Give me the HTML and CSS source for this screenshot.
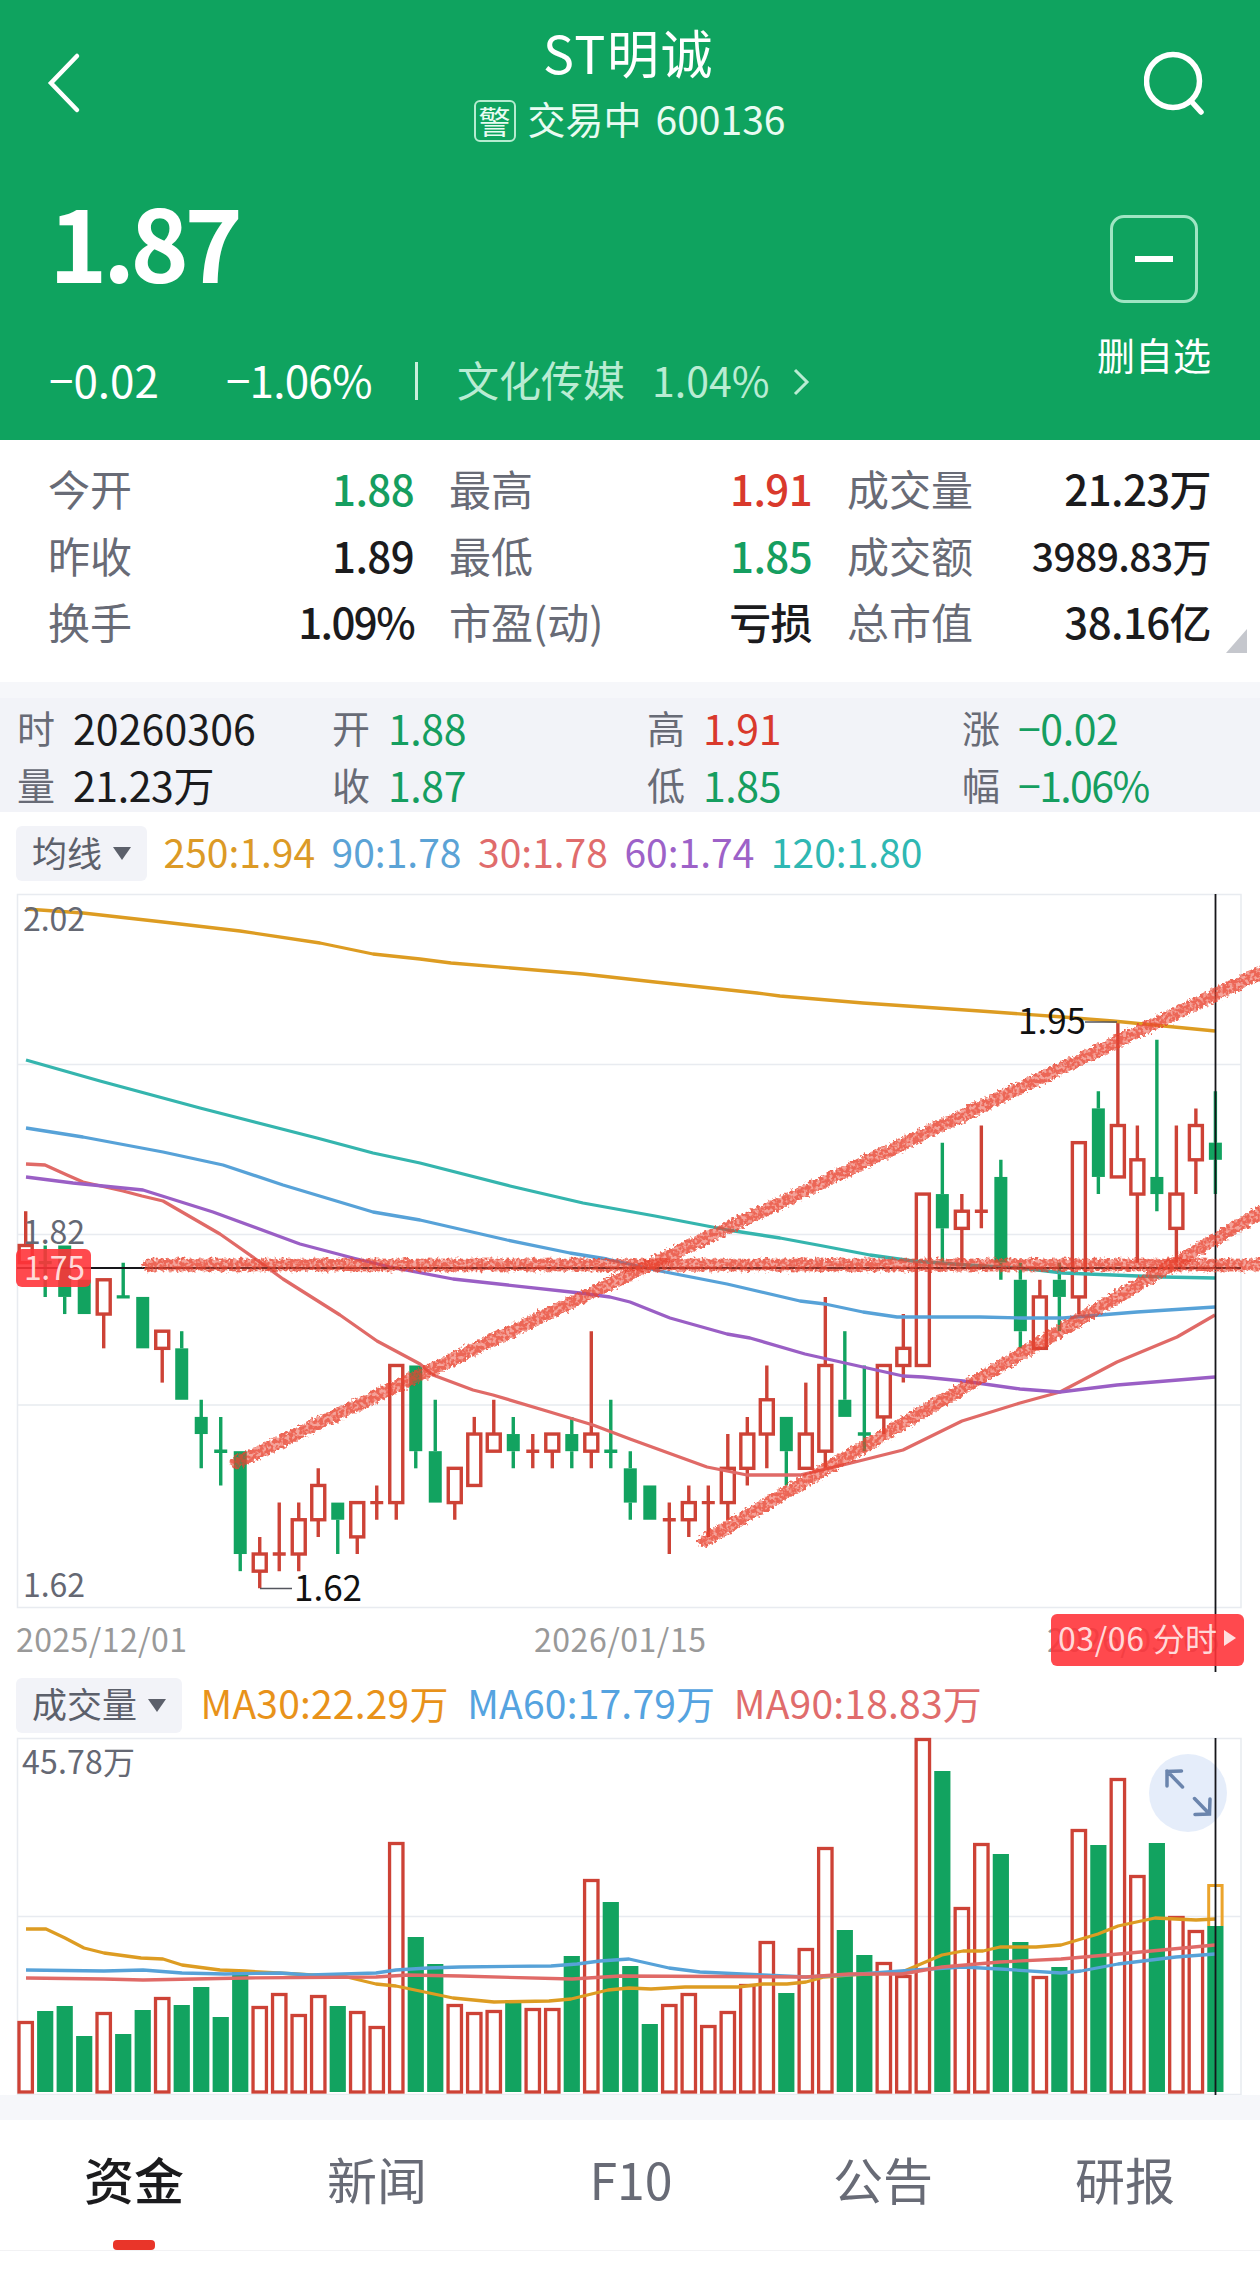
FILE: index.html
```
<!DOCTYPE html>
<html lang="zh-CN">
<head>
    <meta charset="UTF-8">
    <meta name="viewport" content="width=device-width, initial-scale=1.0">
    <title>ST明诚 600136</title>
    <link rel="stylesheet" href="styles.css">
</head>
<body>
    <header>
        <div class="nav">
            <svg class="back" width="40" height="64" viewBox="0 0 40 64"><path d="M32 5L6 32L32 59"/></svg>
            <div class="title">
                <h1>ST明诚</h1>
                <div class="sub"><span class="badge">警</span><span>交易中</span><span>600136</span></div>
            </div>
            <svg class="search" width="64" height="68" viewBox="0 0 64 68"><circle cx="29" cy="31" r="26.5"/><path d="M47 51L57 62"/></svg>
        </div>
        <div class="quote">
            <div>
                <div class="price">1.87</div>
                <div class="change">
                    <span class="diff">−0.02</span>
                    <span class="rate">−1.06%</span>
                    <i></i>
                    <span class="sector">文化传媒</span>
                    <span class="sector-rate">1.04%</span>
                    <svg width="20" height="30" viewBox="0 0 20 30"><path d="M3 3L15 15L3 27"/></svg>
                </div>
            </div>
            <div class="fav">
                <div class="fav-btn"><b></b></div>
                <span>删自选</span>
            </div>
        </div>
    </header>

    <section class="stats">
        <div><label>今开</label><span class="green">1.88</span></div>
        <div><label>最高</label><span class="red">1.91</span></div>
        <div><label>成交量</label><span>21.23万</span></div>
        <div><label>昨收</label><span>1.89</span></div>
        <div><label>最低</label><span class="green">1.85</span></div>
        <div><label>成交额</label><span class="long">3989.83万</span></div>
        <div><label>换手</label><span class="pct">1.09%</span></div>
        <div><label>市盈(动)</label><span>亏损</span></div>
        <div><label>总市值</label><span>38.16亿</span></div>
        <svg class="corner" width="21" height="24" viewBox="0 0 21 24"><path d="M21 0V24H0Z"/></svg>
    </section>

    <section class="info">
        <div><label>时</label><span class="day">20260306</span></div>
        <div><label>开</label><span class="green">1.88</span></div>
        <div><label>高</label><span class="red">1.91</span></div>
        <div><label>涨</label><span class="green">−0.02</span></div>
        <div><label>量</label><span>21.23万</span></div>
        <div><label>收</label><span class="green">1.87</span></div>
        <div><label>低</label><span class="green">1.85</span></div>
        <div><label>幅</label><span class="green pct">−1.06%</span></div>
    </section>

    <div class="legend ma">
        <div class="pill">均线<i></i></div>
        <span class="c-orange">250:1.94</span>
        <span class="c-blue">90:1.78</span>
        <span class="c-red">30:1.78</span>
        <span class="c-purple">60:1.74</span>
        <span class="c-teal">120:1.80</span>
    </div>
    <svg id="kline" width="1260" height="790" viewBox="0 882 1260 790">
        <defs>
            <filter id="crayon" filterUnits="userSpaceOnUse" x="0" y="882" width="1260" height="790">
                <feTurbulence type="fractalNoise" baseFrequency="0.3" numOctaves="2" seed="4" result="noise"/>
                <feDisplacementMap in="SourceGraphic" in2="noise" scale="8" xChannelSelector="R" yChannelSelector="G" result="rough"/>
                <feColorMatrix in="noise" type="matrix" values="0 0 0 0 0  0 0 0 0 0  0 0 0 0 0  0 0 5 0 -1.75" result="grain"/>
                <feComposite in="rough" in2="grain" operator="in" result="dots"/>
                <feComponentTransfer in="rough" result="base"><feFuncA type="linear" slope="0.6"/></feComponentTransfer>
                <feMerge><feMergeNode in="base"/><feMergeNode in="dots"/></feMerge>
            </filter>
        </defs>
        <path class="grid" d="M17.5 894.5H1241V1607.5H17.5ZM17.5 1064.5H1241M17.5 1234.5H1241M17.5 1405H1241"/>
        <g id="candles"></g>
        <g class="lines">
            <polyline class="s-orange" points="26,909 83,913 163,922 240,931 320,943 373,954 420,959 451,963 583,974 655,982 757,993 780,996 863,1003 980,1011 1063,1017 1113,1021 1215,1031"/>
            <polyline class="s-teal" points="26,1060 100,1081 200,1108 317,1138 373,1153 420,1163 510,1186 583,1203 655,1216 728,1230 780,1238 823,1246 870,1255 913,1261 967,1265 1020,1268 1063,1273 1163,1277 1215,1278"/>
            <polyline class="s-blue" points="26,1128 83,1137 163,1152 223,1165 283,1185 373,1212 420,1220 507,1240 570,1253 607,1259 660,1271 727,1284 800,1301 825,1304 863,1312 897,1317 980,1317 1020,1318 1063,1318 1137,1312 1215,1307"/>
            <polyline class="s-red" points="26,1164 45,1165 67,1175 83,1182 123,1191 142,1196 163,1201 220,1234 257,1260 283,1279 340,1315 377,1341 420,1364 433,1375 473,1390 493,1395 550,1412 593,1425 630,1439 707,1467 747,1475 800,1475 847,1464 903,1450 962,1421 1020,1403 1060,1392 1117,1362 1177,1337 1215,1315"/>
            <polyline class="s-purple" points="26,1177 73,1183 143,1190 213,1212 300,1244 353,1258 390,1267 453,1279 580,1293 610,1297 630,1302 670,1318 727,1334 750,1338 805,1354 845,1363 903,1376 923,1377 963,1381 1020,1389 1060,1392 1117,1385 1215,1377"/>
        </g>
        <text class="axis" x="23" y="931" textLength="62">2.02</text>
        <text class="axis" x="23" y="1244" textLength="62">1.82</text>
        <text class="axis" x="23" y="1597" textLength="62">1.62</text>
        <path class="lead" d="M260 1588.5H292M1085 1022H1117"/>
        <text class="mark" x="294" y="1601" textLength="68">1.62</text>
        <text class="mark" x="1018" y="1034" textLength="68">1.95</text>
        <text class="date" x="16" y="1652" textLength="171">2025/12/01</text>
        <text class="date" x="534" y="1652" textLength="172">2026/01/15</text>
        <text class="date" x="1047" y="1652" textLength="172">2026/03/06</text>
        <path class="cross" d="M17 1268H1241M1215.5 894V1672"/>
        <rect class="tag" x="16" y="1249" width="75" height="38" rx="6"/>
        <text class="tag-text" x="24" y="1280" textLength="61">1.75</text>
        <rect class="tag" x="1051" y="1614" width="193" height="52" rx="6"/>
        <text class="tag-text" x="1058" y="1651" textLength="86">03/06</text>
        <text class="tag-text" x="1153" y="1651" textLength="64">分时</text>
        <path class="tag-arrow" d="M1224 1630V1646L1236 1638Z"/>
        <g class="brush">
            <line x1="236" y1="1463" x2="1275" y2="966" filter="url(#crayon)"/>
            <line x1="704" y1="1541" x2="1275" y2="1204" filter="url(#crayon)"/>
            <line x1="149" y1="1265" x2="1275" y2="1265" filter="url(#crayon)"/>
        </g>
    </svg>

    <div class="legend vol">
        <div class="pill">成交量<i></i></div>
        <span class="c-amber">MA30:22.29万</span>
        <span class="c-sky">MA60:17.79万</span>
        <span class="c-red">MA90:18.83万</span>
    </div>
    <svg id="volume" width="1260" height="359" viewBox="0 1736 1260 359">
        <path class="grid" d="M17.5 1738.5H1241V2094.5H17.5ZM17.5 1916.5H1241"/>
        <g id="bars"></g>
        <g class="lines">
            <polyline class="s-orange" points="26,1929 46,1929 65,1938 84,1948 104,1953 141,1958 163,1959 182,1965 220,1970 245,1971 278,1973 347,1977 376,1984 396,1986 453,1998 494,2002 549,2001 571,1999 608,1990 629,1988 651,1989 685,1987 738,1987 763,1984 787,1984 806,1982 824,1977 849,1975 902,1972 942,1955 963,1951 983,1951 1000,1947 1036,1947 1061,1945 1098,1934 1118,1926 1155,1918 1196,1920 1215,1919"/>
            <polyline class="s-blue" points="26,1970 104,1971 143,1970 182,1973 225,1974 280,1973 310,1975 376,1973 396,1970 428,1968 460,1967 551,1966 577,1964 600,1961 629,1959 669,1968 700,1972 763,1975 806,1977 860,1974 915,1970 963,1967 1000,1969 1061,1973 1081,1971 1118,1964 1176,1957 1215,1954"/>
            <polyline class="s-red" points="26,1978 104,1979 143,1980 245,1978 376,1977 408,1975 460,1976 572,1979 620,1976 806,1977 849,1974 902,1974 942,1967 1000,1962 1061,1959 1130,1953 1215,1945"/>
        </g>
        <text class="axis" x="22" y="1774" textLength="113">45.78万</text>
        <circle class="zoom-bg" cx="1188" cy="1793" r="39"/>
        <path class="zoom-icon" d="M1182.500 1787L1167 1771M1167 1786V1771.500L1181.500 1771M1194.500 1798.500L1209.500 1814M1195 1814.500L1209.500 1814L1210 1799"/>
        <path class="cross" d="M1215.500 1738V2095"/>
    </svg>

    <nav class="tabs">
        <a class="active">资金</a>
        <a>新闻</a>
        <a>F10</a>
        <a>公告</a>
        <a>研报</a>
    </nav>

    <script src="chart.js"></script>
</body>
</html>
```
FILE: styles.css
```
* {
    box-sizing: border-box;
}

body {
    margin: 0;
    width: 1260px;
    min-height: 2285px;
    background-color: #fff;
    color: #1b1b1d;
    font-family: "Noto Sans CJK SC", "Noto Sans", sans-serif;
}

svg {
    display: block;
    flex: none;
}

header {
    height: 440px;
    background-color: #0fa35f;
    color: #fff;
}

.nav {
    height: 160px;
    padding: 0 52px 0 45px;
    display: flex;
    justify-content: space-between;
}

.back, .search {
    fill: none;
    stroke: #fff;
    stroke-width: 4.5;
    stroke-linecap: round;
}

.back {
    margin-top: 51px;
}

.search {
    margin-top: 50px;
    stroke-width: 5.5;
}

.title {
    margin-left: 30px;
    padding-top: 21px;
    text-align: center;
}

h1 {
    margin: 0 2px 0 0;
    height: 79px;
    line-height: 62px;
    font-size: 52px;
    font-weight: 400;
    letter-spacing: 1.5px;
}

.sub {
    display: flex;
    align-items: center;
    gap: 12px;
    height: 42px;
    line-height: 38px;
    font-size: 38px;
    color: #e9fbf2;
}

.sub span {
    padding-bottom: 6px;
}

.sub span:last-child {
    font-size: 39px;
    margin-left: 2px;
}

.sub .badge {
    width: 42px;
    height: 42px;
    padding-bottom: 0;
    line-height: 37px;
    border: 2px solid #b5ecd0;
    border-radius: 6px;
    font-size: 32px;
    text-align: center;
}

.quote {
    display: flex;
    justify-content: space-between;
    padding: 0 49px 0 49px;
}

.price {
    margin-top: 19px;
    height: 150px;
    line-height: 122px;
    font-size: 99px;
    font-weight: 700;
    letter-spacing: -4.5px;
}

.change {
    display: flex;
    align-items: center;
    height: 100px;
    font-size: 44px;
    line-height: 60px;
}

.diff {
    width: 177px;
}

.rate {
    width: 189px;
    letter-spacing: -0.8px;
}

.change i {
    width: 3px;
    height: 38px;
    margin-top: 4px;
    background-color: #c9efdc;
    margin-right: 39px;
}

.sector {
    width: 195px;
    font-size: 42px;
    color: #b9ecd3;
}

.sector-rate {
    width: 140px;
    font-size: 41px;
    color: #b9ecd3;
}

.change svg {
    margin-top: 6px;
    fill: none;
    stroke: #b9ecd3;
    stroke-width: 3;
}

.fav {
    width: 114px;
    padding-top: 55px;
    text-align: center;
    font-size: 38px;
    line-height: 56px;
}

.fav-btn {
    width: 88px;
    height: 88px;
    margin: 0 auto 23px;
    border: 3px solid #9fe5c3;
    border-radius: 14px;
    display: flex;
    align-items: center;
    justify-content: center;
}

.fav-btn b {
    width: 38px;
    height: 6px;
    background-color: #fff;
}

.stats {
    position: relative;
    height: 242px;
    padding: 15px 49px 0 48px;
    display: grid;
    grid-template-columns: 366px 363px 364px;
    column-gap: 35px;
    grid-auto-rows: 66.5px;
    font-size: 42px;
    line-height: 66px;
}

.stats div {
    display: flex;
    justify-content: space-between;
    white-space: nowrap;
}

.stats span {
    font-weight: 500;
    letter-spacing: -0.6px;
}

.stats .long {
    font-size: 39px;
}

.stats .pct, .info .pct {
    letter-spacing: -1.6px;
}

label {
    color: #686b76;
}

.stats .green, .info .green {
    color: #159e60;
}

.stats .red, .info .red {
    color: #d9392c;
}

.corner {
    position: absolute;
    right: 13px;
    bottom: 29px;
    fill: #c5c7cd;
}

.info {
    height: 130px;
    padding: 1px 0 0 17px;
    border-top: 16px solid #f6f7fa;
    background-color: #f2f3f8;
    display: grid;
    grid-template-columns: repeat(4, 315px);
    grid-auto-rows: 57px;
    font-size: 41px;
    line-height: 56px;
}

.info div {
    display: flex;
}

.info span {
    letter-spacing: -0.4px;
}

.info .day {
    letter-spacing: 0.1px;
}

.info label {
    width: 56px;
    font-size: 38px;
}

.legend {
    display: flex;
    align-items: center;
    padding-left: 16px;
    font-size: 39px;
    line-height: 54px;
    white-space: nowrap;
}

.legend span {
    padding-bottom: 6px;
}

.ma {
    height: 70px;
    padding-top: 13px;
    gap: 16.5px;
}

.vol {
    height: 64px;
    padding-top: 2px;
    gap: 18.5px;
}

.vol span {
    letter-spacing: 0.2px;
}

.pill {
    display: flex;
    align-items: center;
    height: 55px;
    padding: 0 16px 4px;
    border-radius: 6px;
    background-color: #f2f3f8;
    color: #5c606b;
    font-size: 35px;
}

.pill i {
    margin: 4px 0 0 11px;
    border: 9px solid transparent;
    border-top: 13px solid #5c606b;
    border-bottom: 0;
}

.c-orange { color: #dc9a26; }
.c-amber { color: #e8921a; }
.c-blue { color: #5ba3d6; }
.c-sky { color: #55a3e0; }
.c-red { color: #e06c6c; }
.c-purple { color: #9d62c8; }
.c-teal { color: #2fb8b3; }

.grid {
    fill: none;
    stroke: #e8ebf0;
    stroke-width: 1.5;
}

.lines polyline {
    fill: none;
    stroke-width: 3.3;
    stroke-linejoin: round;
}

.lines .s-orange { stroke: #dd9c22; }
.lines .s-teal { stroke: #35b5ae; }
.lines .s-blue { stroke: #57a2d8; }
.lines .s-red { stroke: #e06a67; }
.lines .s-purple { stroke: #9a5fc5; }

.up {
    fill: none;
    stroke: #cd4236;
    stroke-width: 3.4;
}

.bar-up {
    fill: none;
    stroke: #cd4236;
    stroke-width: 3.3;
}

.down {
    fill: #12a360;
}

.down-line {
    stroke: #12a360;
    stroke-width: 3.4;
}

.forecast {
    fill: none;
    stroke: #eba42c;
    stroke-width: 3;
}

.axis {
    font-size: 32px;
    fill: #656873;
}

.mark {
    font-size: 35px;
    fill: #111;
}

.lead {
    stroke: #54565e;
    stroke-width: 1.5;
}

.date {
    font-size: 32px;
    fill: #999;
}

.cross {
    fill: none;
    stroke: #16161a;
    stroke-width: 1.8;
}

.tag {
    fill: #ff3338;
    fill-opacity: 0.89;
}

.tag-text {
    font-size: 32px;
    fill: #ffd9d9;
}

.tag-arrow {
    fill: #ffe0e0;
}

.brush line {
    stroke: #e94530;
    stroke-width: 12.5;
    stroke-linecap: round;
    opacity: 0.82;
}

.zoom-bg {
    fill: #e2ebf9;
    fill-opacity: 0.9;
}

.zoom-icon {
    fill: none;
    stroke: #6b85ad;
    stroke-width: 3.5;
    stroke-linecap: round;
}

.tabs {
    height: 156px;
    border-top: 25px solid #f6f7fa;
    border-bottom: 1px solid #f2f2f4;
    display: grid;
    grid-template-columns: 268px 218px 290px 214px 270px;
    font-size: 50px;
    line-height: 116px;
    text-align: center;
    color: #686b76;
}

.tabs a {
    display: flex;
    flex-direction: column;
    align-items: center;
}

.tabs .active {
    color: #1b1b1d;
    font-weight: 500;
}

.tabs .active::after {
    content: "";
    width: 42px;
    height: 10px;
    margin-top: 4px;
    border-radius: 4px;
    background-color: #e93529;
}
```
FILE: chart.js
```
// [up, open/close top, open/close bottom, high, low] in cents, then top edge of the volume bar
const days = [
    [1, 182, 181, 184, 181, 2021], [0, 181, 181, 182, 179, 2011], [0, 182, 179, 182, 178, 2006],
    [0, 180, 178, 180, 178, 2036], [1, 180, 178, 180, 176, 2012], [0, 179, 179, 181, 179, 2034],
    [0, 179, 176, 179, 176, 2010], [1, 177, 176, 177, 174, 1997], [0, 176, 173, 177, 173, 2005],
    [0, 172, 171, 173, 169, 1987], [0, 170, 170, 172, 168, 2017], [0, 170, 164, 170, 163, 1970],
    [1, 164, 163, 165, 162, 2006], [1, 164, 164, 167, 163, 1993], [1, 166, 164, 167, 163, 2014],
    [1, 168, 166, 169, 165, 1995], [0, 167, 166, 167, 164, 2006], [1, 167, 165, 167, 164, 2011],
    [1, 167, 167, 168, 166, 2026], [1, 175, 167, 175, 166, 1842], [0, 175, 170, 175, 169, 1937],
    [0, 170, 167, 173, 167, 1964], [1, 169, 167, 169, 166, 2004], [1, 171, 168, 172, 168, 2012],
    [1, 171, 170, 173, 170, 2010], [0, 171, 170, 172, 169, 2000], [1, 170, 170, 171, 169, 2008],
    [1, 171, 170, 171, 169, 2008], [0, 171, 170, 172, 169, 1956], [1, 171, 170, 177, 169, 1879],
    [0, 170, 170, 173, 169, 1902], [0, 169, 167, 170, 166, 1966], [0, 168, 166, 168, 166, 2024],
    [1, 166, 166, 167, 164, 2004], [1, 167, 166, 168, 165, 1993], [1, 167, 167, 168, 165, 2025],
    [1, 169, 167, 171, 166, 2011], [1, 171, 169, 172, 168, 1984], [1, 173, 171, 175, 169, 1941],
    [0, 172, 170, 172, 168, 1993], [1, 171, 169, 174, 169, 1948], [1, 175, 170, 179, 169, 1847],
    [0, 173, 172, 177, 172, 1930], [0, 171, 171, 175, 170, 1955], [1, 175, 172, 175, 171, 1962],
    [1, 176, 175, 178, 174, 1975], [1, 185, 175, 185, 175, 1738], [0, 185, 183, 188, 181, 1771],
    [1, 184, 183, 185, 181, 1907], [1, 184, 184, 189, 183, 1843], [0, 186, 181, 187, 180, 1854],
    [0, 180, 177, 181, 176, 1942], [1, 179, 176, 180, 176, 1976], [0, 180, 179, 181, 177, 1967],
    [1, 188, 179, 188, 178, 1829], [0, 190, 186, 191, 185, 1845], [1, 189, 186, 195, 186, 1778],
    [1, 187, 185, 189, 181, 1875], [0, 186, 185, 194, 184, 1843], [1, 185, 183, 189, 181, 1916],
    [1, 189, 187, 190, 185, 1930], [0, 188, 187, 191, 185, 1926]
];

const baseY = 2092;

function priceY(p) {
    return 1588.3 - (p - 162) * 17.14;
}

let candles = '';
let bars = '';

days.forEach(function (d, i) {
    const x = 25.7 + i * 19.503;
    const top = priceY(d[1]);
    const bottom = priceY(d[2]);
    const high = priceY(d[3]);
    const low = priceY(d[4]);
    const line = d[0] ? 'up' : 'down-line';

    if (d[1] === d[2]) {
        candles += `<path class="${line}" d="M${x} ${high}V${low}M${x - 6.5} ${top}H${x + 6.5}"/>`;
    } else {
        candles += `<path class="${line}" d="M${x} ${high}V${top}M${x} ${bottom}V${low}"/>`;
        if (d[0]) {
            candles += `<rect class="up" x="${x - 6.5}" y="${top}" width="13" height="${bottom - top}"/>`;
        } else {
            candles += `<rect class="down" x="${x - 6.5}" y="${top}" width="13" height="${bottom - top}"/>`;
        }
    }

    if (d[0]) {
        bars += `<rect class="bar-up" x="${x - 6.7}" y="${d[5] + 1.5}" width="13.4" height="${baseY - d[5] - 1.5}"/>`;
    } else {
        bars += `<rect class="down" x="${x - 8.1}" y="${d[5]}" width="16.2" height="${baseY - d[5]}"/>`;
    }
});

// projected full day volume on top of the last bar
bars += '<path class="forecast" d="M1208.700 1926V1885.500H1222.100V1926"/>';

document.getElementById('candles').innerHTML = candles;
document.getElementById('bars').innerHTML = bars;
```
